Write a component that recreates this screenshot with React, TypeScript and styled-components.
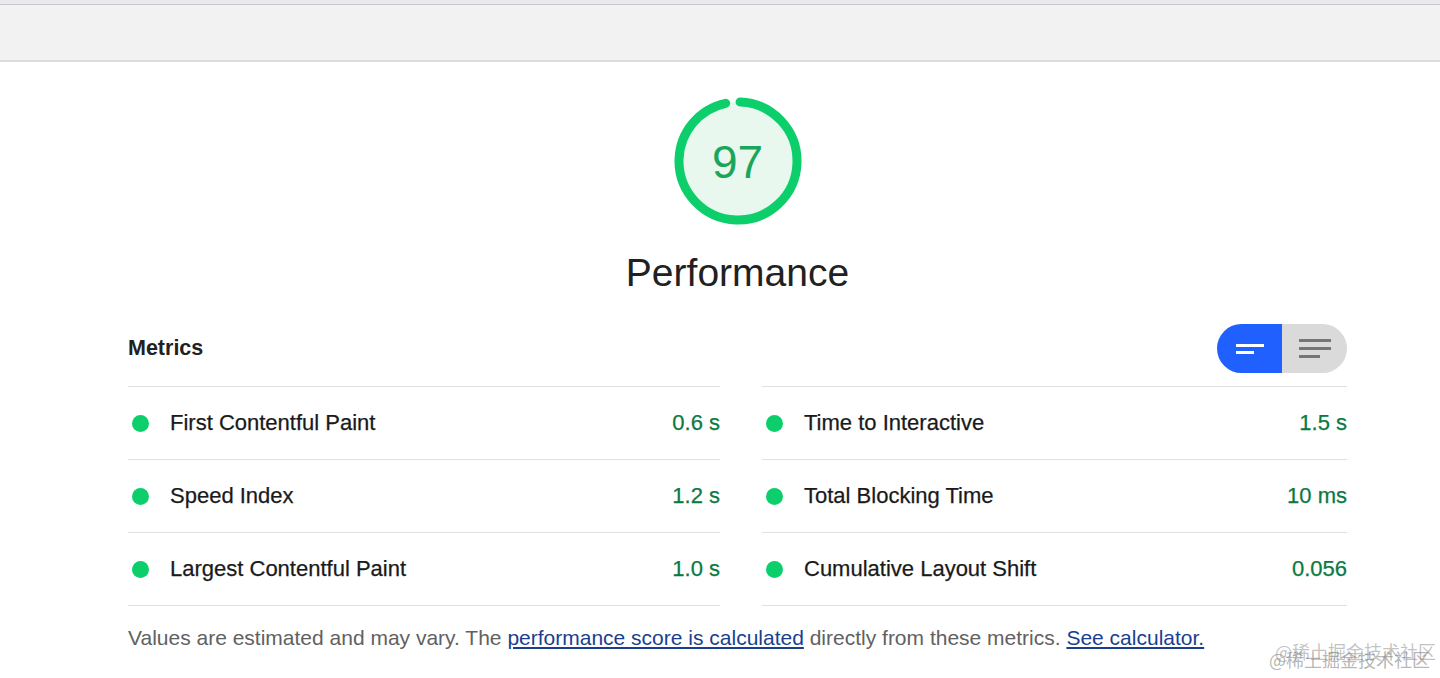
import React from "react";
import styled, { createGlobalStyle } from "styled-components";

const GlobalStyle = createGlobalStyle`
  html, body {
    margin: 0;
    padding: 0;
    background: #ffffff;
    font-family: "Liberation Sans", Arial, Helvetica, sans-serif;
    color: #212121;
  }
`;

interface Metric {
  label: string;
  value: string;
}

const leftMetrics: Metric[] = [
  { label: "First Contentful Paint", value: "0.6 s" },
  { label: "Speed Index", value: "1.2 s" },
  { label: "Largest Contentful Paint", value: "1.0 s" },
];

const rightMetrics: Metric[] = [
  { label: "Time to Interactive", value: "1.5 s" },
  { label: "Total Blocking Time", value: "10 ms" },
  { label: "Cumulative Layout Shift", value: "0.056" },
];

const Gauge: React.FC<{ score: number }> = ({ score }) => {
  const r = 59;
  const c = 2 * Math.PI * r;
  const filled = (score / 100) * c - 4;
  return (
    <GaugeWrap>
      <svg width="132" height="132" viewBox="0 0 132 132">
        <circle cx="66" cy="66" r={r} fill="#e8f8ef" />
        <circle
          cx="66"
          cy="66"
          r={r}
          fill="none"
          stroke="#0cce6b"
          strokeWidth="9"
          strokeLinecap="round"
          strokeDasharray={`${filled} ${c}`}
          transform="rotate(-88 66 66)"
        />
      </svg>
      <GaugeNumber>{score}</GaugeNumber>
    </GaugeWrap>
  );
};

const MetricRow: React.FC<Metric> = ({ label, value }) => (
  <Row>
    <Dot />
    <Label>{label}</Label>
    <Value>{value}</Value>
  </Row>
);

const App: React.FC = () => {
  return (
    <>
      <GlobalStyle />
      <Page>
        <TopBar />
        <Content>
          <ScoreBlock>
            <Gauge score={97} />
            <ScoreTitle>Performance</ScoreTitle>
          </ScoreBlock>

          <MetricsHeader>
            <MetricsTitle>Metrics</MetricsTitle>
            <Toggle>
              <ToggleHalf active>
                <svg width="30" height="14" viewBox="0 0 30 14">
                  <rect x="1" y="2" width="28" height="3" fill="#ffffff" />
                  <rect x="1" y="9" width="18" height="3" fill="#ffffff" />
                </svg>
              </ToggleHalf>
              <ToggleHalf>
                <svg width="34" height="24" viewBox="0 0 34 24">
                  <rect x="1" y="2" width="32" height="3" fill="#757575" />
                  <rect x="1" y="10" width="32" height="3" fill="#757575" />
                  <rect x="1" y="18" width="21" height="3" fill="#757575" />
                </svg>
              </ToggleHalf>
            </Toggle>
          </MetricsHeader>

          <MetricsGrid>
            <Column>
              {leftMetrics.map((m) => (
                <MetricRow key={m.label} {...m} />
              ))}
            </Column>
            <Column>
              {rightMetrics.map((m) => (
                <MetricRow key={m.label} {...m} />
              ))}
            </Column>
          </MetricsGrid>

          <Footnote>
            Values are estimated and may vary. The{" "}
            <Link href="#">performance score is calculated</Link> directly from
            these metrics. <Link href="#">See calculator.</Link>
          </Footnote>
        </Content>
        <Watermark>@稀土掘金技术社区</Watermark>
      </Page>
    </>
  );
};

export default App;

const Page = styled.div`
  position: relative;
  width: 1440px;
  height: 678px;
  overflow: hidden;
  background: #ffffff;
`;

const TopBar = styled.div`
  height: 56px;
  background: #f2f2f2;
  border-top: 4px solid #e9e9ee;
  box-shadow: inset 0 1px 0 #c9c9ce;
  border-bottom: 2px solid #dcdcdc;
  box-sizing: content-box;
`;

const Content = styled.div`
  width: 1219px;
  margin-left: 128px;
  display: flex;
  flex-direction: column;
`;

const ScoreBlock = styled.div`
  display: flex;
  flex-direction: column;
  align-items: center;
  padding-top: 33px;
`;

const GaugeWrap = styled.div`
  position: relative;
  width: 132px;
  height: 132px;
`;

const GaugeNumber = styled.div`
  position: absolute;
  inset: 0;
  display: flex;
  align-items: center;
  justify-content: center;
  font-size: 46px;
  color: #1aa65a;
  padding-top: 2px;
`;

const ScoreTitle = styled.div`
  margin-top: 26px;
  font-size: 39px;
  color: #212121;
  line-height: 40px;
`;

const MetricsHeader = styled.div`
  display: flex;
  align-items: center;
  justify-content: space-between;
  margin-top: 31px;
  height: 49px;
  margin-bottom: 13px;
`;

const MetricsTitle = styled.div`
  font-size: 21.5px;
  font-weight: 700;
  color: #212121;
`;

const Toggle = styled.div`
  display: flex;
  width: 130px;
  height: 49px;
  border-radius: 25px;
  overflow: hidden;
`;

const ToggleHalf = styled.div<{ active?: boolean }>`
  flex: 1;
  display: flex;
  align-items: center;
  justify-content: center;
  background: ${(p) => (p.active ? "#2060ff" : "#dadada")};
`;

const MetricsGrid = styled.div`
  display: grid;
  grid-template-columns: 592px 585px;
  column-gap: 42px;
`;

const Column = styled.div`
  display: flex;
  flex-direction: column;
  border-top: 1px solid #e0e0e0;
`;

const Row = styled.div`
  display: flex;
  align-items: center;
  height: 72px;
  border-bottom: 1px solid #e0e0e0;
`;

const Dot = styled.span`
  width: 17px;
  height: 17px;
  border-radius: 50%;
  background: #0cce6b;
  margin-left: 4px;
  margin-right: 21px;
  flex-shrink: 0;
`;

const Label = styled.span`
  flex: 1;
  font-size: 22px;
  color: #1a1a1a;
  -webkit-text-stroke: 0.25px #1a1a1a;
`;

const Value = styled.span`
  font-size: 22px;
  color: #0a7a42;
  -webkit-text-stroke: 0.25px #0a7a42;
`;

const Footnote = styled.p`
  margin: 20px 0 0;
  font-size: 21px;
  color: #616161;
  line-height: 24px;
`;

const Link = styled.a`
  color: #1a3f8f;
  text-decoration: underline;
`;

const Watermark = styled.div`
  position: absolute;
  right: 10px;
  bottom: 6px;
  font-family: "Noto Sans CJK SC", sans-serif;
  font-size: 18px;
  white-space: nowrap;
  color: rgba(120, 120, 120, 0.55);
  text-shadow: 6px -8px 0 rgba(120, 120, 120, 0.45);
`;
